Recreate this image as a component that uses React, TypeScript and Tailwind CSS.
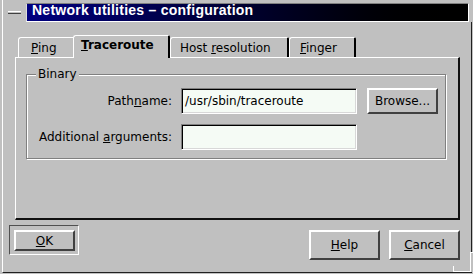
import React from "react";

function U({ children }: { children: React.ReactNode }) {
  return <span className="underline underline-offset-[1px] decoration-1">{children}</span>;
}

const raised =
  "border-2 border-t-white border-l-white border-b-[#404040] border-r-[#404040] bg-[#c0c0c0] flex items-center justify-center";
const sunken =
  "border border-t-[#808080] border-l-[#808080] border-b-white border-r-white bg-[#f5fbf5] shadow-[inset_1px_1px_0_#000,inset_-1px_-1px_0_#d8d8d8] flex items-center pl-[3px]";

export default function App() {
  return (
    <div className="w-[473px] h-[274px] bg-[#c0c0c0] relative overflow-hidden font-['DejaVu_Sans',sans-serif] text-[12px] leading-[14px] text-black">
      <div className="ml-[2px] w-[470px] h-[273px] border-l border-l-white border-b border-b-[#202020] flex flex-col">
        {/* title row */}
        <div className="h-[22px] pt-[3px] flex items-start shrink-0">
          <div className="mt-[8px] ml-[5px] w-[13px] h-[3px] border-t border-t-white border-b border-b-[#404040]" />
          <div className="ml-[5px] w-[443px] h-[19px] border border-t-[#808080] border-l-[#dcdcdc] border-b-white border-r-white bg-gradient-to-r from-[#000080] to-[#000000] pl-[5px]">
            <div className="font-['Liberation_Sans',Arial,sans-serif] font-bold text-[14px] leading-[12px] tracking-[0.25px] text-white whitespace-nowrap">
              Network utilities – configuration
            </div>
          </div>
        </div>

        {/* body */}
        <div className="flex-1 border-r border-r-[#202020] flex flex-col">
          {/* tabs */}
          <div className="mt-[13px] h-[22px] pl-[15px] flex items-end shrink-0">
            <div className="w-[55px] h-[20px] border-t border-l border-t-white border-l-white rounded-tl-[3px] pt-[3px] pl-[12px] whitespace-nowrap">
              <U>P</U>ing
            </div>
            <div className="relative z-10 -mb-px w-[97px] h-[23px] border-t border-l border-r-2 border-t-white border-l-white border-r-[#000] rounded-tl-[3px] rounded-tr-[2px] bg-[#c0c0c0] pt-[2px] pl-[7px] font-bold whitespace-nowrap">
              <U>T</U>raceroute
            </div>
            <div className="w-[119px] h-[20px] border-t border-l border-r-2 border-t-white border-l-white border-r-[#000] rounded-tl-[3px] rounded-tr-[2px] pt-[3px] pl-[9px] whitespace-nowrap">
              Host <U>r</U>esolution
            </div>
            <div className="w-[67px] h-[20px] border-t border-l border-r-2 border-t-white border-l-white border-r-[#000] rounded-tl-[3px] rounded-tr-[2px] pt-[3px] pl-[10px] whitespace-nowrap">
              <U>F</U>inger
            </div>
          </div>

          {/* panel */}
          <div className="ml-[12px] w-[445px] h-[163px] shrink-0 border-t border-l border-t-white border-l-white border-r-2 border-b-2 border-r-[#101010] border-b-[#101010]">
            <fieldset className="mt-[9px] ml-[10px] w-[420px] border border-[#808080] shadow-[1px_1px_0_#fff,inset_1px_1px_0_#fff] pb-[8px]">
              <legend className="ml-[9px] px-[2px] leading-[14px] bg-[#c0c0c0]">Binary</legend>
              <div className="mt-[7px] flex items-center h-[26px]">
                <div className="w-[145px] text-right whitespace-nowrap">
                  Path<U>n</U>ame:
                </div>
                <div className={`ml-[9px] w-[176px] h-[26px] ${sunken}`}>/usr/sbin/traceroute</div>
                <div className={`ml-[10px] w-[71px] h-[26px] ${raised}`}>Browse...</div>
              </div>
              <div className="mt-[10px] flex items-center h-[26px]">
                <div className="w-[145px] text-right whitespace-nowrap">
                  Additional <U>a</U>rguments:
                </div>
                <div className={`ml-[9px] w-[176px] h-[26px] ${sunken}`}></div>
              </div>
            </fieldset>
          </div>

          {/* buttons */}
          <div className="mt-[5px] pl-[6px] pr-[11px] flex items-start">
            <div className="w-[70px] h-[30px] border border-t-[#505050] border-l-[#505050] border-b-white border-r-white pt-[4px] pl-[4px]">
              <div className={`w-[61px] h-[21px] ${raised}`}>
                <U>O</U>K
              </div>
            </div>
            <div className={`ml-auto mt-[5px] w-[71px] h-[30px] ${raised}`}>
              <U>H</U>elp
            </div>
            <div className={`ml-[9px] mt-[5px] w-[71px] h-[30px] ${raised}`}>
              <U>C</U>ancel
            </div>
          </div>
        </div>
      </div>

      {/* resize grip */}
      <div className="absolute left-[470px] top-[252px] w-[3px] h-[20px] bg-[#c0c0c0] border-l border-t border-l-white border-t-white" />
      <div className="absolute left-[453px] top-[266px] w-[17px] h-[6px] border-l border-b border-l-white border-b-white" />
    </div>
  );
}
